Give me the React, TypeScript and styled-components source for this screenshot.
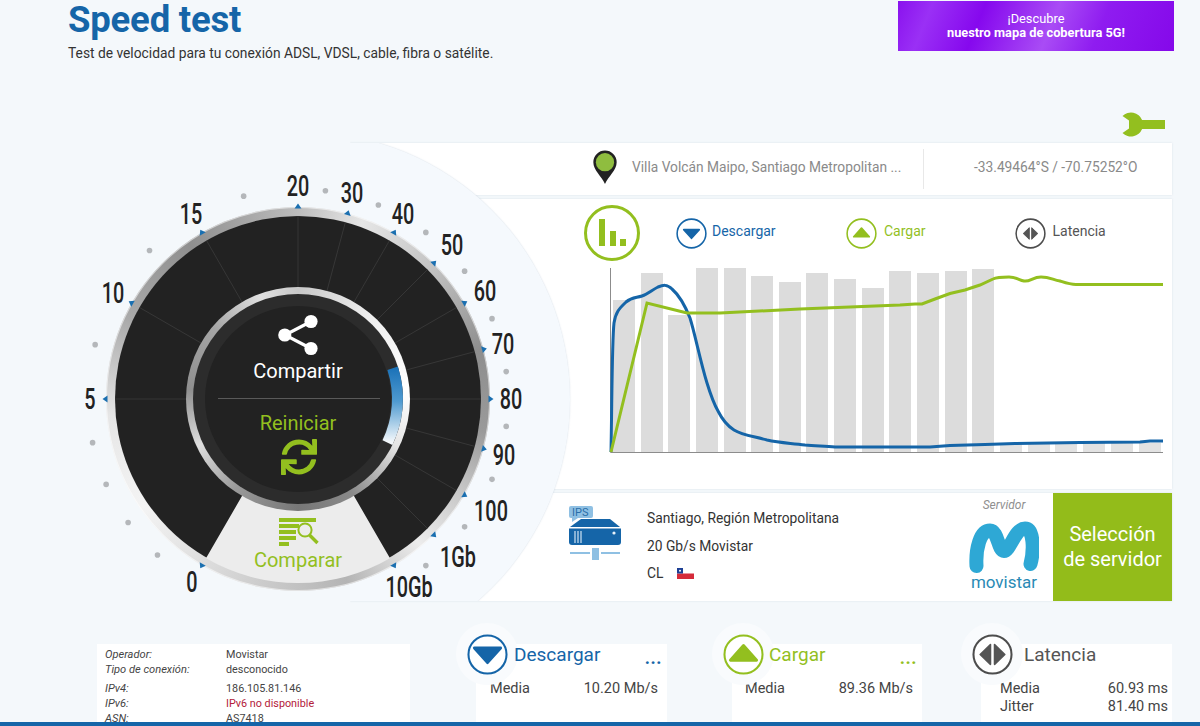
import React from "react";
import styled, { createGlobalStyle } from "styled-components";
import { FaSync } from "react-icons/fa";

const GREEN = "#93bf1f";
const BLUE = "#1565a8";
const FONT = `Roboto, "Liberation Sans", sans-serif`;

const Global = createGlobalStyle`
  html, body { margin: 0; padding: 0; background: #f4f8fb; }
  body { font-family: ${FONT}; }
`;

const Page = styled.div`
  position: relative;
  width: 1200px;
  height: 726px;
  overflow: hidden;
  display: flex;
  flex-direction: column;
  background: #f4f8fb;
`;

const Header = styled.header`
  display: flex;
  justify-content: space-between;
  align-items: flex-start;
  height: 112px;
  padding: 1px 26px 0 68px;
  box-sizing: border-box;
`;

const TitleBlock = styled.div`
  display: flex;
  flex-direction: column;
`;

const Title = styled.h1`
  margin: 0;
  font-size: 36.5px;
  line-height: 38px;
  font-weight: 700;
  color: ${BLUE};
  letter-spacing: -0.2px;
`;

const Subtitle = styled.p`
  margin: 5px 0 0;
  font-size: 13.8px;
  line-height: 18px;
  color: #333;
`;

const Banner = styled.a`
  width: 276px;
  height: 50px;
  display: flex;
  flex-direction: column;
  align-items: center;
  justify-content: center;
  color: #fff;
  font-size: 12.8px;
  line-height: 14px;
  background: linear-gradient(112deg, #8a12ee 0%, #9a30f5 12%, #8608ee 30%, #a94cf5 55%, #8f1cf0 72%, #8508ea 100%);
`;

const BannerStrong = styled.strong`
  font-weight: 700;
  font-size: 12.8px;
`;

const ToolRow = styled.div`
  display: flex;
  justify-content: flex-end;
  height: 31px;
  padding-right: 35px;
`;

const Cards = styled.main`
  display: flex;
  flex-direction: column;
  gap: 3px;
  margin-left: 350px;
  width: 822px;
`;

const Card = styled.section`
  background: #fff;
  box-shadow: 0 0 2px rgba(120, 140, 160, 0.2);
  clip-path: inset(-3px -3px -3px 0);
`;

const LocationCard = styled(Card)`
  height: 52px;
  display: flex;
  align-items: center;
  padding-left: 242px;
  margin-bottom: 1px;
  color: #8a8a8a;
`;

const PinSlot = styled.div`
  width: 26px;
  margin: 0 14px 0 0;
  padding-bottom: 3px;
  display: flex;
`;

const Place = styled.span`
  width: 291px;
  padding-bottom: 4px;
  font-size: 13.75px;
  white-space: nowrap;
`;

const Coords = styled.span`
  border-left: 1px solid #e8e8e8;
  padding: 10px 0 14px 50px;
  font-size: 13.75px;
  white-space: nowrap;
`;

const ChartCard = styled(Card)`
  height: 290px;
  margin-bottom: 1px;
  display: flex;
  flex-direction: column;
`;

const ChartHead = styled.div`
  display: flex;
  align-items: center;
  height: 66px;
  padding: 2px 0 0 234px;
  box-sizing: border-box;
`;

const BigBadge = styled.div`
  width: 56px;
  height: 56px;
  flex: none;
  margin-right: 36px;
  display: flex;
`;

const LegendItem = styled.div<{ $color: string; $gap: number }>`
  width: 169.5px;
  flex: none;
  display: flex;
  align-items: center;
  gap: ${(p) => p.$gap}px;
  font-size: 14px;
  color: ${(p) => p.$color};
`;

const LegendText = styled.span`
  padding-bottom: 4px;
`;

const ChartSvg = styled.svg`
  display: block;
  margin-left: 259px;
`;

const ServerCard = styled(Card)`
  height: 108px;
  display: flex;
  padding-left: 219px;
`;

const ServerIconSlot = styled.div`
  width: 52px;
  margin: 12px 26px 0 0;
`;

const ServerInfo = styled.div`
  flex: 1;
  display: flex;
  flex-direction: column;
  padding-top: 17px;
  gap: 10.5px;
  font-size: 13.8px;
  line-height: 17px;
  color: #333;
`;

const ServerLine = styled.div`
  display: flex;
  align-items: center;
  gap: 14px;
  white-space: nowrap;
`;

const Provider = styled.div`
  width: 80px;
  margin-right: 9px;
  display: flex;
  flex-direction: column;
  align-items: center;
  padding-top: 5px;
`;

const ProviderCaption = styled.span`
  font-size: 12px;
  line-height: 14px;
  font-style: italic;
  color: #8f8f8f;
  margin-bottom: 9px;
`;

const ProviderName = styled.span`
  font-size: 17px;
  line-height: 18px;
  color: #2a8ab5;
`;

const ServerButton = styled.button`
  width: 119px;
  border: 0;
  padding: 0;
  background: #93bc1a;
  color: #fff;
  font-family: ${FONT};
  font-size: 20px;
  line-height: 25px;
`;

const BottomRow = styled.div`
  flex: 1;
  min-height: 0;
  display: flex;
  margin-top: 43px;
  padding-left: 97px;
`;

const InfoCard = styled.section`
  width: 313px;
  margin-right: 66px;
  padding: 3px 8px 0;
  box-sizing: border-box;
  background: #fff;
  line-height: 15px;
  color: #444;
  overflow: hidden;
`;

const InfoRow = styled.div<{ $gapTop?: boolean }>`
  display: grid;
  grid-template-columns: 121px 1fr;
  margin-top: ${(p) => (p.$gapTop ? "4px" : "0")};
  white-space: nowrap;
`;

const InfoLabel = styled.span`
  font-style: italic;
  font-size: 11.1px;
`;

const InfoValue = styled.span<{ $warn?: boolean }>`
  font-size: 10.8px;
  color: ${(p) => (p.$warn ? "#b3203a" : "#444")};
`;

const StatCard = styled.section<{ $width: number; $gap: number; $left: number; $right: number }>`
  position: relative;
  width: ${(p) => p.$width}px;
  margin-right: ${(p) => p.$gap}px;
  padding: 0 ${(p) => p.$right}px 0 ${(p) => p.$left}px;
  box-sizing: border-box;
  background: #fff;
`;

const StatBadge = styled.div`
  position: absolute;
  left: -20px;
  top: -21px;
  width: 62px;
  height: 62px;
  border-radius: 50%;
  background: #f9fbfd;
  display: flex;
  align-items: center;
  justify-content: center;
`;

const StatHead = styled.div<{ $color: string; $shift: number }>`
  position: relative;
  display: flex;
  justify-content: space-between;
  padding-left: ${(p) => p.$shift}px;
  height: 36px;
  font-size: 19px;
  line-height: 21px;
  color: ${(p) => p.$color};
`;

const Dots = styled.span`
  margin-right: -4px;
  font-size: 18px;
  font-weight: 700;
  line-height: 28px;
  letter-spacing: 0.5px;
`;

const StatRow = styled.div`
  display: flex;
  justify-content: space-between;
  font-size: 14.5px;
  line-height: 18px;
  color: #444;
`;

const BottomBar = styled.div`
  height: 4px;
  flex: none;
  background: ${BLUE};
`;

/* ---------- gauge ---------- */

const GaugeStage = styled.div`
  position: absolute;
  left: 18px;
  top: 119px;
  width: 560px;
  height: 560px;
`;

const Halo = styled.div`
  position: absolute;
  left: 18px;
  top: 13px;
  width: 534px;
  height: 534px;
  border-radius: 50%;
  background: #f5f9fd;
  box-shadow: 0 0 1.5px rgba(150, 170, 190, 0.45);
  clip-path: inset(11px -4px 65px 314px);
`;

const OuterRing = styled.div`
  position: absolute;
  left: 88px;
  top: 88px;
  width: 384px;
  height: 384px;
  border-radius: 50%;
  background: conic-gradient(#bdbdbd 0deg, #e6e6e6 20deg, #c4c4c4 45deg, #8e8e8e 75deg, #9a9a9a 100deg, #c4c4c4 118deg, #ececec 140deg, #b4b4b4 165deg, #d4d4d4 200deg, #f4f4f4 235deg, #e6e6e6 265deg, #aaaaaa 295deg, #8f8f8f 325deg, #a8a8a8 345deg, #bdbdbd 360deg);
  box-shadow: inset 0 0 0 1px rgba(255, 255, 255, 0.55);
`;

const DialSvg = styled.svg`
  position: absolute;
  left: 0;
  top: 0;
`;

const CenterRing = styled.div`
  position: absolute;
  left: 168px;
  top: 168px;
  width: 224px;
  height: 224px;
  border-radius: 50%;
  background: conic-gradient(#c8c8c8 0deg, #eee 40deg, #fff 85deg, #e6e6e6 115deg, #8a8a8a 150deg, #777 180deg, #9a9a9a 215deg, #dedede 245deg, #8f8f8f 275deg, #a5a5a5 310deg, #e0e0e0 340deg, #c8c8c8 360deg);
  display: flex;
  align-items: center;
  justify-content: center;
`;

const CenterBand = styled.div`
  width: 210px;
  height: 210px;
  border-radius: 50%;
  background: #2c2c2c;
  display: flex;
  align-items: center;
  justify-content: center;
`;

const CenterCore = styled.div`
  width: 186px;
  height: 186px;
  border-radius: 50%;
  background: #222;
`;

const DialLabel = styled.span<{ $x: number; $y: number }>`
  position: absolute;
  left: ${(p) => p.$x}px;
  top: ${(p) => p.$y}px;
  transform: translate(-50%, -50%) scaleX(0.66);
  font-size: 30px;
  font-weight: 500;
  line-height: 30px;
  color: #222;
  white-space: nowrap;
`;

const CenterAction = styled.div<{ $y: number; $color: string }>`
  position: absolute;
  left: 0;
  width: 560px;
  top: ${(p) => p.$y}px;
  text-align: center;
  font-size: 20px;
  line-height: 24px;
  color: ${(p) => p.$color};
`;

const CenterRule = styled.div`
  position: absolute;
  left: 200px;
  top: 279px;
  width: 162px;
  height: 1px;
  background: #5a5a5a;
`;

const IconSpot = styled.div<{ $x: number; $y: number }>`
  position: absolute;
  left: ${(p) => p.$x}px;
  top: ${(p) => p.$y}px;
  display: flex;
  color: ${GREEN};
`;

/* ---------- helpers ---------- */

const CX = 280;
const CY = 280;
const polar = (r: number, deg: number) => {
  const a = (deg * Math.PI) / 180;
  return { x: CX + r * Math.cos(a), y: CY + r * Math.sin(a) };
};

const TICKS = [120, 180, -150, -120, -90, -75, -60, -45, -30, -15, 0, 15, 30, 45, 60];
const DOTS = [132, 144, 156, 168, -165, -135, -105, -82.5, -67.5, -52.5, -37.5, -22.5, -7.5, 7.5, 22.5, 37.5, 52.5];
const LINES = [180, -150, -120, -90, -75, -60, -45, -30, -15, 0, 15, 30, 45];

const LABELS: [string, number, number][] = [
  ["0", 192, 582], ["5", 90, 399], ["10", 113, 293], ["15", 191, 214],
  ["20", 298, 186], ["30", 352, 193], ["40", 403, 214], ["50", 452, 245],
  ["60", 485, 291], ["70", 503, 344], ["80", 511, 399], ["90", 504, 455],
  ["100", 491, 511], ["1Gb", 458, 557], ["10Gb", 409, 587],
];

const sector = (r0: number, r1: number, a0: number, a1: number) => {
  const p0 = polar(r1, a0), p1 = polar(r1, a1), p2 = polar(r0, a1), p3 = polar(r0, a0);
  return `M${p0.x} ${p0.y}A${r1} ${r1} 0 0 1 ${p1.x} ${p1.y}L${p2.x} ${p2.y}A${r0} ${r0} 0 0 0 ${p3.x} ${p3.y}Z`;
};

const arc = (r: number, a0: number, a1: number) => {
  const p0 = polar(r, a0), p1 = polar(r, a1);
  return `M${p0.x} ${p0.y}A${r} ${r} 0 0 1 ${p1.x} ${p1.y}`;
};

const BARS: [number, number][] = [
  [613, 300], [641, 273], [668, 315], [696, 268], [724, 268], [751, 276], [779, 282],
  [806, 273], [834, 279], [862, 288], [889, 271], [917, 273], [945, 271], [972, 269],
];
const LOW_BARS = [1000, 1028, 1055, 1083, 1111, 1139];

const BLUE_LINE = "M611 452C612 400 612 340 614 323C616 311 620 308 626 302C632 297 636 298 642 296C648 294 652 290 658 287C663 285 667 284 672 289C680 296 686 308 690 318C695 334 700 360 707 383C711 396 714 404 718 411C722 419 726 425 734 430C742 435 752 436 767 440C780 443 790 443 805 445C815 446 825 446 835 447L930 447L950 445.5L985 444.5L1015 443.5L1080 442.5L1140 442L1150 441L1163 441";
const GREEN_LINE = "M611 452L647 303L687 313L720 313L800 309L900 305L915 304L922 304L935 299L950 293.5L965 290L980 285L993 279C997 277 1003 277 1009 277C1016 277 1019 280 1024 281C1030 282 1033 277 1041 277C1050 277 1053 280 1060 281C1066 283 1070 284.5 1076 284.5L1163 284.5";

/* ---------- drawings ---------- */

const Triangle = ({ kind, color, s }: { kind: "down" | "up"; color: string; s: number }) => (
  <path
    d={kind === "down" ? `M${-s} ${-s * 0.5}H${s}L0 ${s * 0.62}Z` : `M${-s} ${s * 0.5}H${s}L0 ${-s * 0.62}Z`}
    fill={color}
    stroke={color}
    strokeWidth={s * 0.22}
    strokeLinejoin="round"
  />
);

const RingIcon = ({ kind, size, mark }: { kind: "down" | "up" | "lat"; size: number; mark: number }) => {
  const color = kind === "down" ? BLUE : kind === "up" ? GREEN : "#4d4d4d";
  const r = 50 - 3.6;
  const k = mark / 32;
  return (
    <svg width={size} height={size} viewBox="-50 -50 100 100">
      <circle r={r} fill="#fff" stroke={color} strokeWidth={5} />
      {kind === "lat" ? (
        <g fill="#555" stroke="#555" strokeWidth={4} strokeLinejoin="round" transform={`scale(${k})`}>
          <path d="M-5 -24V24L-30 0Z" />
          <path d="M5 -24V24L30 0Z" />
        </g>
      ) : kind === "down" ? (
        <Triangle kind="down" color={color} s={mark} />
      ) : (
        <g transform="translate(0 -2)">
          <Triangle kind="up" color={color} s={mark} />
        </g>
      )}
    </svg>
  );
};

const Wrench = () => (
  <svg width="46" height="25" viewBox="0 0 46 25">
    <path d="M3.5 4A12 12 0 0 1 23.1 8H46V17H23.1A12 12 0 0 1 3.5 21L10 16.5V8.5Z" fill={GREEN} />
  </svg>
);

const Pin = () => (
  <svg width="26" height="35" viewBox="0 0 24 33">
    <path d="M12 32C9 25 1 19 1 11.5A11 11 0 0 1 23 11.5C23 19 15 25 12 32Z" fill="#222" />
    <circle cx="12" cy="11.5" r="8.6" fill="#8fbd3f" />
  </svg>
);

const BarsBadge = () => (
  <svg width="56" height="56" viewBox="0 0 56 56">
    <circle cx="28" cy="28" r="26.5" fill="#fff" stroke={GREEN} strokeWidth="3" />
    <rect x="15" y="14" width="6" height="27" fill={GREEN} />
    <rect x="26" y="26" width="6" height="15" fill={GREEN} />
    <rect x="36" y="34" width="6" height="7" fill={GREEN} />
  </svg>
);

const ServerGlyph = () => (
  <svg width="52" height="56" viewBox="0 0 52 56">
    <rect x="0" y="1" width="24" height="12" rx="2" fill="#8fc0e3" />
    <path d="M3 13H9L3 17Z" fill="#8fc0e3" />
    <text x="3" y="11" fontSize="11" fontFamily={FONT} fill="#2a6ea8">IPS</text>
    <path d="M12 14H41L51 22H1Z" fill={BLUE} />
    <path d="M0 23.5H52V37Q52 40 49 40H3Q0 40 0 37Z" fill={BLUE} />
    <path d="M6 26V38M9 26V38M12 26V38" stroke="#cfe3f3" strokeWidth="1.2" />
    <circle cx="45" cy="28" r="1.6" fill="#e8f2fa" />
    <rect x="23" y="43" width="7" height="12" fill="#8fc0e3" />
    <path d="M1 48H21M32 48H51" stroke="#8fc0e3" strokeWidth="2" />
  </svg>
);

const ChileFlag = () => (
  <svg width="17" height="11" viewBox="0 0 17 11">
    <rect width="17" height="5.5" fill="#fff" />
    <rect y="5.5" width="17" height="5.5" fill="#d52b3a" />
    <rect width="6" height="5.5" fill="#1c3f94" />
    <circle cx="3" cy="2.7" r="1" fill="#fff" />
  </svg>
);

const MovistarM = () => (
  <svg width="70" height="52" viewBox="0 0 70 52">
    <path
      d="M7.5 45C6.5 28 11 9.5 21 9.5C29 9.5 29 30 35 30C41 30 46 7.5 56 7.5C65 7.5 65 30 61.5 43"
      fill="none"
      stroke="#2ea8d5"
      strokeWidth="14"
      strokeLinecap="round"
      strokeLinejoin="round"
    />
  </svg>
);

const ShareGlyph = () => (
  <svg width="42" height="42" viewBox="0 0 42 42" fill="#fff">
    <path d="M33 7.5L7 21L33 34.5" fill="none" stroke="#fff" strokeWidth="3.2" />
    <circle cx="33" cy="7.5" r="6.6" />
    <circle cx="6.8" cy="21" r="6.6" />
    <circle cx="33" cy="34.5" r="6.6" />
  </svg>
);

const CompareGlyph = () => (
  <svg width="40" height="28" viewBox="0 0 40 28" fill={GREEN}>
    <rect x="0" y="0" width="37" height="4" />
    <rect x="0" y="6" width="20" height="4" />
    <rect x="0" y="12" width="17" height="4" />
    <rect x="0" y="18" width="17" height="4" />
    <rect x="0" y="24" width="10" height="4" />
    <circle cx="26" cy="12" r="6.6" fill="#ececec" stroke={GREEN} strokeWidth="2" />
    <path d="M30.5 17L38.5 25" stroke={GREEN} strokeWidth="3.4" />
  </svg>
);

const Gauge = () => (
  <GaugeStage>
    <Halo />
    <OuterRing />
    <DialSvg width="560" height="560" viewBox="0 0 560 560">
      <defs>
        <linearGradient id="prog" gradientUnits="userSpaceOnUse" x1="0" y1="249" x2="0" y2="323">
          <stop offset="0" stopColor="#1b72b8" />
          <stop offset="0.45" stopColor="#4f9ad0" />
          <stop offset="1" stopColor="#f4f8fb" />
        </linearGradient>
      </defs>
      <circle cx={CX} cy={CY} r="183" fill="#222" />
      <path d={sector(108, 184, 60, 120)} fill="#ececec" />
      {LINES.map((a) => {
        const p0 = polar(110, a), p1 = polar(183, a);
        return <line key={a} x1={p0.x} y1={p0.y} x2={p1.x} y2={p1.y} stroke="#444" strokeWidth="0.6" />;
      })}
      {DOTS.map((a) => {
        const p = polar(210, a);
        return <circle key={a} cx={p.x} cy={p.y} r="2.8" fill="#b4b7ba" />;
      })}
      {TICKS.map((a) => {
        const p = polar(193, a);
        return (
          <path
            key={a}
            d="M-2.5 -3.5L2.5 0L-2.5 3.5Z"
            fill="#1a6fb0"
            transform={`translate(${p.x} ${p.y}) rotate(${a})`}
          />
        );
      })}
    </DialSvg>
    <CenterRing>
      <CenterBand>
        <CenterCore />
      </CenterBand>
    </CenterRing>
    <DialSvg width="560" height="560" viewBox="0 0 560 560">
      <path d={arc(99.5, -18, 26)} fill="none" stroke="url(#prog)" strokeWidth="11" />
    </DialSvg>
    {LABELS.map(([t, x, y]) => (
      <DialLabel key={t} $x={x - 18} $y={y - 119}>{t}</DialLabel>
    ))}
    <IconSpot $x={260} $y={195}><ShareGlyph /></IconSpot>
    <CenterAction $y={240} $color="#fff">Compartir</CenterAction>
    <CenterRule />
    <CenterAction $y={292} $color={GREEN}>Reiniciar</CenterAction>
    <IconSpot $x={263} $y={320}><FaSync size={36} /></IconSpot>
    <IconSpot $x={261} $y={399}><CompareGlyph /></IconSpot>
    <CenterAction $y={429} $color={GREEN}>Comparar</CenterAction>
  </GaugeStage>
);

export default function App() {
  return (
    <Page>
      <Global />
      <Header>
        <TitleBlock>
          <Title>Speed test</Title>
          <Subtitle>Test de velocidad para tu conexión ADSL, VDSL, cable, fibra o satélite.</Subtitle>
        </TitleBlock>
        <Banner>
          <span>¡Descubre</span>
          <BannerStrong>nuestro mapa de cobertura 5G!</BannerStrong>
        </Banner>
      </Header>
      <ToolRow><Wrench /></ToolRow>
      <Cards>
        <LocationCard>
          <PinSlot><Pin /></PinSlot>
          <Place>Villa Volcán Maipo, Santiago Metropolitan ...</Place>
          <Coords>-33.49464°S / -70.75252°O</Coords>
        </LocationCard>
        <ChartCard>
          <ChartHead>
            <BigBadge><BarsBadge /></BigBadge>
            <LegendItem $color={BLUE} $gap={5}><RingIcon kind="down" size={31} mark={25} /><LegendText>Descargar</LegendText></LegendItem>
            <LegendItem $color={GREEN} $gap={7.5}><RingIcon kind="up" size={31} mark={25} /><LegendText>Cargar</LegendText></LegendItem>
            <LegendItem $color="#555" $gap={6.5}><RingIcon kind="lat" size={31} mark={25} /><LegendText>Latencia</LegendText></LegendItem>
          </ChartHead>
          <ChartSvg width="556" height="190" viewBox="609 265 556 190">
            {BARS.map(([x, top]) => (
              <rect key={x} x={x} y={top} width="22" height={452 - top} fill="#dcdcdc" />
            ))}
            {LOW_BARS.map((x) => (
              <rect key={x} x={x} y="443" width="22" height="9" fill="#e2e2e2" />
            ))}
            <path d="M610.5 268V452.5H1163" fill="none" stroke="#8c8c8c" strokeWidth="1" />
            <path d={BLUE_LINE} fill="none" stroke={BLUE} strokeWidth="3" />
            <path d={GREEN_LINE} fill="none" stroke={GREEN} strokeWidth="3" />
          </ChartSvg>
        </ChartCard>
        <ServerCard>
          <ServerIconSlot><ServerGlyph /></ServerIconSlot>
          <ServerInfo>
            <ServerLine>Santiago, Región Metropolitana</ServerLine>
            <ServerLine>20 Gb/s Movistar</ServerLine>
            <ServerLine>CL <ChileFlag /></ServerLine>
          </ServerInfo>
          <Provider>
            <ProviderCaption>Servidor</ProviderCaption>
            <MovistarM />
            <ProviderName>movistar</ProviderName>
          </Provider>
          <ServerButton>Selección<br />de servidor</ServerButton>
        </ServerCard>
      </Cards>
      <BottomRow>
        <InfoCard>
          <InfoRow><InfoLabel>Operador:</InfoLabel><InfoValue>Movistar</InfoValue></InfoRow>
          <InfoRow><InfoLabel>Tipo de conexión:</InfoLabel><InfoValue>desconocido</InfoValue></InfoRow>
          <InfoRow $gapTop><InfoLabel>IPv4:</InfoLabel><InfoValue>186.105.81.146</InfoValue></InfoRow>
          <InfoRow><InfoLabel>IPv6:</InfoLabel><InfoValue $warn>IPv6 no disponible</InfoValue></InfoRow>
          <InfoRow><InfoLabel>ASN:</InfoLabel><InfoValue>AS7418</InfoValue></InfoRow>
        </InfoCard>
        <StatCard $width={191} $gap={65} $left={14} $right={9}>
          <StatBadge><RingIcon kind="down" size={41} mark={32} /></StatBadge>
          <StatHead $color={BLUE} $shift={24}>Descargar<Dots>...</Dots></StatHead>
          <StatRow><span>Media</span><span>10.20 Mb/s</span></StatRow>
        </StatCard>
        <StatCard $width={190} $gap={59} $left={13} $right={9}>
          <StatBadge><RingIcon kind="up" size={41} mark={32} /></StatBadge>
          <StatHead $color={GREEN} $shift={24}>Cargar<Dots>...</Dots></StatHead>
          <StatRow><span>Media</span><span>89.36 Mb/s</span></StatRow>
        </StatCard>
        <StatCard $width={191} $gap={0} $left={19} $right={4}>
          <StatBadge><RingIcon kind="lat" size={41} mark={32} /></StatBadge>
          <StatHead $color="#555" $shift={24}>Latencia</StatHead>
          <StatRow><span>Media</span><span>60.93 ms</span></StatRow>
          <StatRow><span>Jitter</span><span>81.40 ms</span></StatRow>
        </StatCard>
      </BottomRow>
      <BottomBar />
      <Gauge />
    </Page>
  );
}
